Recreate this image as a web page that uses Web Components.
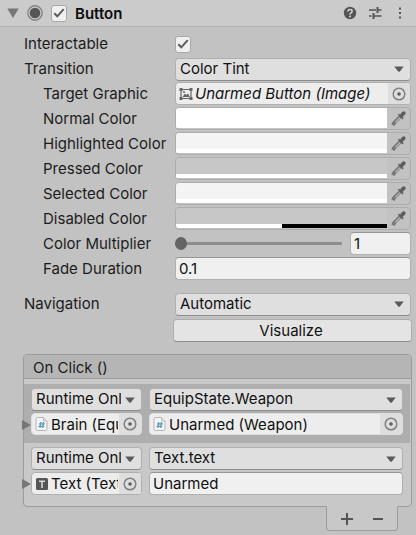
<!DOCTYPE html>
<html lang="en">
<head>
<meta charset="utf-8">
<title>Button inspector</title>
<style>
  html { background: #c2c2c2; }
  body {
    margin: 0;
    font: 15px/22px Inter, "Liberation Sans", sans-serif;
    color: #1c1c1c;
  }
</style>
</head>
<body>
<inspector-panel>
  <component-header slot="header">Button</component-header>
  <prop-toggle label="Interactable"></prop-toggle>
  <prop-select label="Transition" value="Color Tint"></prop-select>
  <prop-object label="Target Graphic" icon="image" indent italic>Unarmed Button (Image)</prop-object>
  <prop-color label="Normal Color" value="#ffffff" indent></prop-color>
  <prop-color label="Highlighted Color" value="#f4f4f4" indent></prop-color>
  <prop-color label="Pressed Color" value="#c7c7c7" indent></prop-color>
  <prop-color label="Selected Color" value="#f4f4f4" indent></prop-color>
  <prop-color label="Disabled Color" value="#c7c7c7" alpha="50" indent></prop-color>
  <prop-slider label="Color Multiplier" value="1" indent></prop-slider>
  <prop-text label="Fade Duration" value="0.1" indent></prop-text>
  <prop-select label="Navigation" value="Automatic" spaced></prop-select>
  <action-button>Visualize</action-button>
  <event-list slot="events" heading="On Click ()">
    <event-entry selected>
      <select-box slot="mode" label="Call state" value="Runtime Only"></select-box>
      <select-box slot="method" label="Function" value="EquipState.Weapon"></select-box>
      <object-box slot="target" label="Target" icon="script" flat>Brain (EquipState)</object-box>
      <object-box slot="argument" label="Argument" icon="script" flat>Unarmed (Weapon)</object-box>
    </event-entry>
    <event-entry>
      <select-box slot="mode" label="Call state" value="Runtime Only"></select-box>
      <select-box slot="method" label="Function" value="Text.text"></select-box>
      <object-box slot="target" label="Target" icon="text">Text (Text)</object-box>
      <text-box slot="argument" label="Argument" value="Unarmed"></text-box>
    </event-entry>
  </event-list>
</inspector-panel>

<script>
const ICONS = {
  image: `<svg width="14" height="14" viewBox="0 0 14 14"><path d="M2 2.5h10v9H2z" fill="none" stroke="#666" stroke-width="1.2"/><path d="M.5 1h3v3h-3zM10.500 1h3v3h-3zM.5 10h3v3h-3zM10.500 10h3v3h-3z" fill="#666"/><path d="M3.500 10l2.500-3.500 1.500 1.500 1.500-1.500 2 3.500z" fill="#666"/><circle cx="5" cy="5" r="1" fill="#666"/></svg>`,
  script: `<svg width="14" height="16" viewBox="0 0 14 16"><path d="M2.500 1.500h6l3.500 3.500v8q0 1.500-1.500 1.500h-8Q1 14.500 1 13V3q0-1.500 1.500-1.500z" fill="#f5f5f5" stroke="#b5b5b5"/><path d="M8.500 1.500v3.500H12" fill="#ddd" stroke="#c0c0c0"/><path d="M5.800 6L5 12M8.500 6l-.8 6M4 7.800h5.800M3.500 10.300h5.800" stroke="#5a9dc2" stroke-width="1.300" fill="none"/></svg>`,
  text: `<svg width="14" height="14" viewBox="0 0 14 14"><rect x="1" y="1" width="12" height="12" rx="1.500" fill="#555"/><path d="M4 4.300h6M7 4.300V11" stroke="#dcdcdc" stroke-width="1.500"/></svg>`,
  target: `<svg width="14" height="14" viewBox="0 0 14 14"><circle cx="7" cy="7" r="5.800" fill="none" stroke="#808080" stroke-width="1.500"/><circle cx="7" cy="7" r="1.800" fill="#5c5c5c"/></svg>`,
  arrow: `<svg class="arrow" width="10" height="6" viewBox="0 0 10 6"><path d="M.3.500h9.400L6 5.200q-1 1-2 0z" fill="#5a5a5a"/></svg>`,
  check: `<svg class="tick" width="12" height="12" viewBox="0 0 12 12"><path d="M1.300 6.300l3 3L10.700 2.200" fill="none" stroke="#5c5c5c" stroke-width="2"/></svg>`,
  dropper: `<svg width="15" height="16" viewBox="0 0 15 16"><path d="M9.500 5.500L3 12 2 14.200" stroke="#777" stroke-width="3.800" fill="none"/><path d="M9 6.800L4.500 11.300" stroke="#b2b2b2" stroke-width="1.600"/><path d="M7 3.500l1.200-.6 4.200 4.200-.8 1.200zM9 4l2.300-3q2-1.200 2.900.2.600 1.500-.5 2.500L11.200 6z" fill="#5c5c5c" stroke="#5c5c5c" stroke-width=".4"/></svg>`
};

const BASE = `
  *, *::before { box-sizing: border-box; }
  :host { display: block; min-width: 0; }
  :host([hidden]) { display: none; }
  svg { display: block; flex: none; }
  button, input, select { font: inherit; color: #111; margin: 0; }
  button { display: flex; align-items: center; justify-content: center; padding: 0; border: 0; background: none; }
  .row { display: grid; grid-template-columns: 151px minmax(0, 1fr); height: 22px; }
  .row > label { white-space: nowrap; line-height: 24px; }
  :host([indent]) .row > label { padding-left: 19px; }
`;

function define(name, css, render) {
  customElements.define(name, class extends HTMLElement {
    constructor() {
      super();
      this.attachShadow({ mode: "open" });
    }
    connectedCallback() {
      this.shadowRoot.innerHTML = `<style>${BASE}${css}</style>${render(this)}`;
    }
  });
}
const attr = (el, name) => el.getAttribute(name) || "";

const selectCss = `
  .select { display: grid; align-items: center; }
  .select > * { grid-area: 1 / 1; }
  select { appearance: none; width: 100%; height: 23px; padding: 0 20px 1px 4px; border: 1px solid #b0b0b0; border-bottom-color: #8d8d8d; border-radius: 4px; background: #dfdfdf; line-height: 20px; }
  .arrow { justify-self: end; margin-right: 7px; pointer-events: none; }
`;
const selectBox = (value, label) =>
  `<div class="select"><select id="field"${label ? ` aria-label="${label}"` : ""}><option>${value}</option></select>${ICONS.arrow}</div>`;

const textCss = `
  .text { display: block; width: 100%; height: 23px; padding: 0 3px; border: 1px solid #b0b0b0; border-top-color: #969696; border-radius: 4px; background: #f0f0f0; line-height: 20px; }
`;
const objectCss = `
  .object { display: grid; grid-template-columns: minmax(0, 1fr) 22px; height: 23px; border: 1px solid #b0b0b0; border-radius: 4px; background: #ededed; overflow: hidden; }
  .value { justify-content: flex-start; gap: 2px; padding: 0 1px 0 3px; overflow: hidden; white-space: nowrap; }
  .value span { overflow: hidden; line-height: 21px; }
  .pick { background: #dedede; }
  :host([flat]) .object { height: 22px; border-color: #dedede; }
`;
const objectBox = (icon, label) =>
  `<div class="object"><button class="value" id="field" type="button"${label ? ` aria-label="${label}"` : ""}>${ICONS[icon]}<span><slot></slot></span></button><button class="pick" type="button" aria-label="Select object">${ICONS.target}</button></div>`;

const toggleCss = `
  .check { display: grid; width: 16px; place-items: center; }
  .check > * { grid-area: 1 / 1; }
  .check input { appearance: none; width: 16px; height: 17px; border: 1px solid #a8a8a8; border-radius: 3px; background: #f0f0f0; }
  .tick { display: none; pointer-events: none; }
  input:checked + .tick { display: block; }
`;

define("select-box", selectCss, el => selectBox(attr(el, "value"), attr(el, "label")));
define("text-box", textCss, el => `<input class="text" type="text" aria-label="${attr(el, "label")}" value="${attr(el, "value")}">`);
define("object-box", objectCss, el => objectBox(attr(el, "icon"), attr(el, "label")));

const row = (el, content) => `<div class="row"><label for="field">${attr(el, "label")}</label>${content}</div>`;

define("prop-toggle", toggleCss, el =>
  row(el, `<div class="check"><input id="field" type="checkbox" checked>${ICONS.check}</div>`));
define("prop-select", selectCss + ":host([spaced]) { margin-top: 10px; }", el => row(el, selectBox(attr(el, "value"))));
define("prop-text", textCss, el => row(el, `<input class="text" id="field" type="text" value="${attr(el, "value")}">`));
define("prop-object", objectCss + ":host([italic]) .value { font-style: italic; }", el => row(el, objectBox(attr(el, "icon"))));

define("prop-color", `
  .color { display: grid; grid-template-columns: minmax(0, 1fr) 23px; height: 23px; border: 1px solid #adadad; border-radius: 4px; overflow: hidden; }
  .swatch { height: 20px; }
  input { appearance: none; display: block; width: 100%; height: 16px; padding: 0; border: 0; background: none; }
  input::-webkit-color-swatch-wrapper { padding: 0; }
  input::-webkit-color-swatch { border: 0; border-radius: 0; }
  .alpha { height: 4px; background: #000; }
  .alpha div { height: 100%; background: #fff; }
`, el => row(el, `<div class="color">
  <div class="swatch"><input id="field" type="color" value="${attr(el, "value")}"><div class="alpha"><div style="width:${attr(el, "alpha") || 100}%"></div></div></div>
  <button type="button" aria-label="Pick color">${ICONS.dropper}</button></div>`));

define("prop-slider", textCss + `
  .slider { display: grid; grid-template-columns: minmax(0, 1fr) 61px; gap: 8px; }
  input[type=range] { appearance: none; width: 100%; height: 23px; background: none; }
  input[type=range]::-webkit-slider-runnable-track { height: 3px; border-radius: 1px; background: #8d8d8d; }
  input[type=range]::-webkit-slider-thumb { appearance: none; width: 12px; height: 13px; margin-top: -5px; border-radius: 50%; background: #646464; }
`, el => row(el, `<div class="slider"><input id="field" type="range" min="1" max="5" value="1"><input class="text" type="text" aria-label="Multiplier value" value="${attr(el, "value")}"></div>`));

define("action-button", `
  :host { padding-left: 149px; margin: 2px -1px 0 0; }
  button { width: 100%; height: 23px; padding-right: 3px; border: 1px solid #adadad; border-bottom-color: #8d8d8d; border-radius: 4px; background: #e4e4e4; line-height: 20px; }
`, () => `<button type="button"><slot></slot></button>`);

define("component-header", toggleCss + `
  header { display: flex; align-items: center; height: 27px; padding: 0 9px 0 7px; background: #cbcbcb; border-bottom: 1px solid #b3b3b3; }
  h1 { margin: 0 auto 0 8px; font-size: 15px; line-height: 24px; font-weight: 600; color: #0c0c0c; padding-top: 2px; }
  .component { margin: 0 8px; }
  .tools { display: flex; align-items: center; gap: 11px; }
`, () => `<header>
  <button type="button" aria-label="Collapse"><svg width="12" height="12" viewBox="0 0 12 12"><path d="M.3 1.500h11.400L6 11z" fill="#777"/></svg></button>
  <svg class="component" width="16" height="16" viewBox="0 0 16 16"><circle cx="8" cy="8" r="7.200" fill="none" stroke="#858585" stroke-width="1.400"/><circle cx="8" cy="8" r="5.300" fill="#565656"/></svg>
  <div class="check"><input type="checkbox" checked aria-label="Enabled">${ICONS.check}</div>
  <h1><slot></slot></h1>
  <div class="tools">
    <button type="button" aria-label="Help"><svg width="14" height="14" viewBox="0 0 14 14"><circle cx="7" cy="7" r="6.200" fill="#555"/><path d="M4.900 5.500q.1-2 2.100-2t2.100 1.700q0 1-1 1.700T7 8.600" fill="none" stroke="#d6d6d6" stroke-width="1.500"/><circle cx="7" cy="10.500" r="1" fill="#d6d6d6"/></svg></button>
    <button type="button" aria-label="Presets"><svg width="14" height="14" viewBox="0 0 14 14"><path d="M1 4h7M10 4h3.500M1 10h2.500M6 10h7.500" stroke="#555" stroke-width="1.600"/><path d="M9.500 1v6M5.500 7v6" stroke="#555" stroke-width="2"/></svg></button>
    <button type="button" aria-label="More"><svg width="14" height="14" viewBox="0 0 14 14"><path d="M6 1.500h2v2H6zM6 6h2v2H6zM6 10.500h2v2H6z" fill="#555"/></svg></button>
  </div></header>`);

define("inspector-panel", `
  main { display: grid; gap: 3px; padding: 5px 5px 0 24px; }
  .events { padding: 12px 4px 3px 23px; }
`, () => `<slot name="header"></slot><main><slot></slot></main><div class="events"><slot name="events"></slot></div>`);

define("event-list", `
  .box { border: 1px solid #9c9c9c; border-radius: 4px; background: #c8c8c8; padding-bottom: 4px; }
  h2 { margin: 0 0 5px; padding: 2px 9px 0; font: inherit; line-height: 21px; background: #b5b5b5; border-bottom: 1px solid #9c9c9c; border-radius: 3px 3px 0 0; }
  footer { display: flex; width: 72px; height: 25px; margin: -1px 14px 0 auto; padding: 0 4px; border: 1px solid #9c9c9c; border-top-color: #c8c8c8; border-radius: 0 0 4px 4px; background: #c8c8c8; }
  footer button { flex: 1; }
`, el => `<section class="box"><h2>${attr(el, "heading")}</h2><slot></slot></section>
<footer><button type="button" aria-label="Add"><svg width="14" height="14" viewBox="0 0 14 14"><path d="M1 7h12M7 1v12" stroke="#555" stroke-width="2"/></svg></button>
<button type="button" aria-label="Remove"><svg width="14" height="14" viewBox="0 0 14 14"><path d="M2 7h10" stroke="#555" stroke-width="2"/></svg></button></footer>`);

define("event-entry", `
  :host { margin-right: 1px; }
  :host([selected]) { background: #aeaeae; }
  .entry { display: grid; grid-template-columns: 7px 111px minmax(0, 1fr); grid-template-rows: 23px 23px; row-gap: 2px; padding: 4px 7px 7px 0; }
  .mode { grid-column: 2; }
  .second { margin-left: 7px; min-width: 0; }
  .fold { justify-content: flex-end; }
`, () => `<div class="entry">
  <div class="mode"><slot name="mode"></slot></div><div class="second"><slot name="method"></slot></div>
  <button class="fold" type="button" aria-label="Expand"><svg width="9" height="10" viewBox="0 0 9 10"><path d="M0 0l9 5-9 5z" fill="#777"/></svg></button>
  <div><slot name="target"></slot></div><div class="second"><slot name="argument"></slot></div></div>`);
</script>
</body>
</html>
